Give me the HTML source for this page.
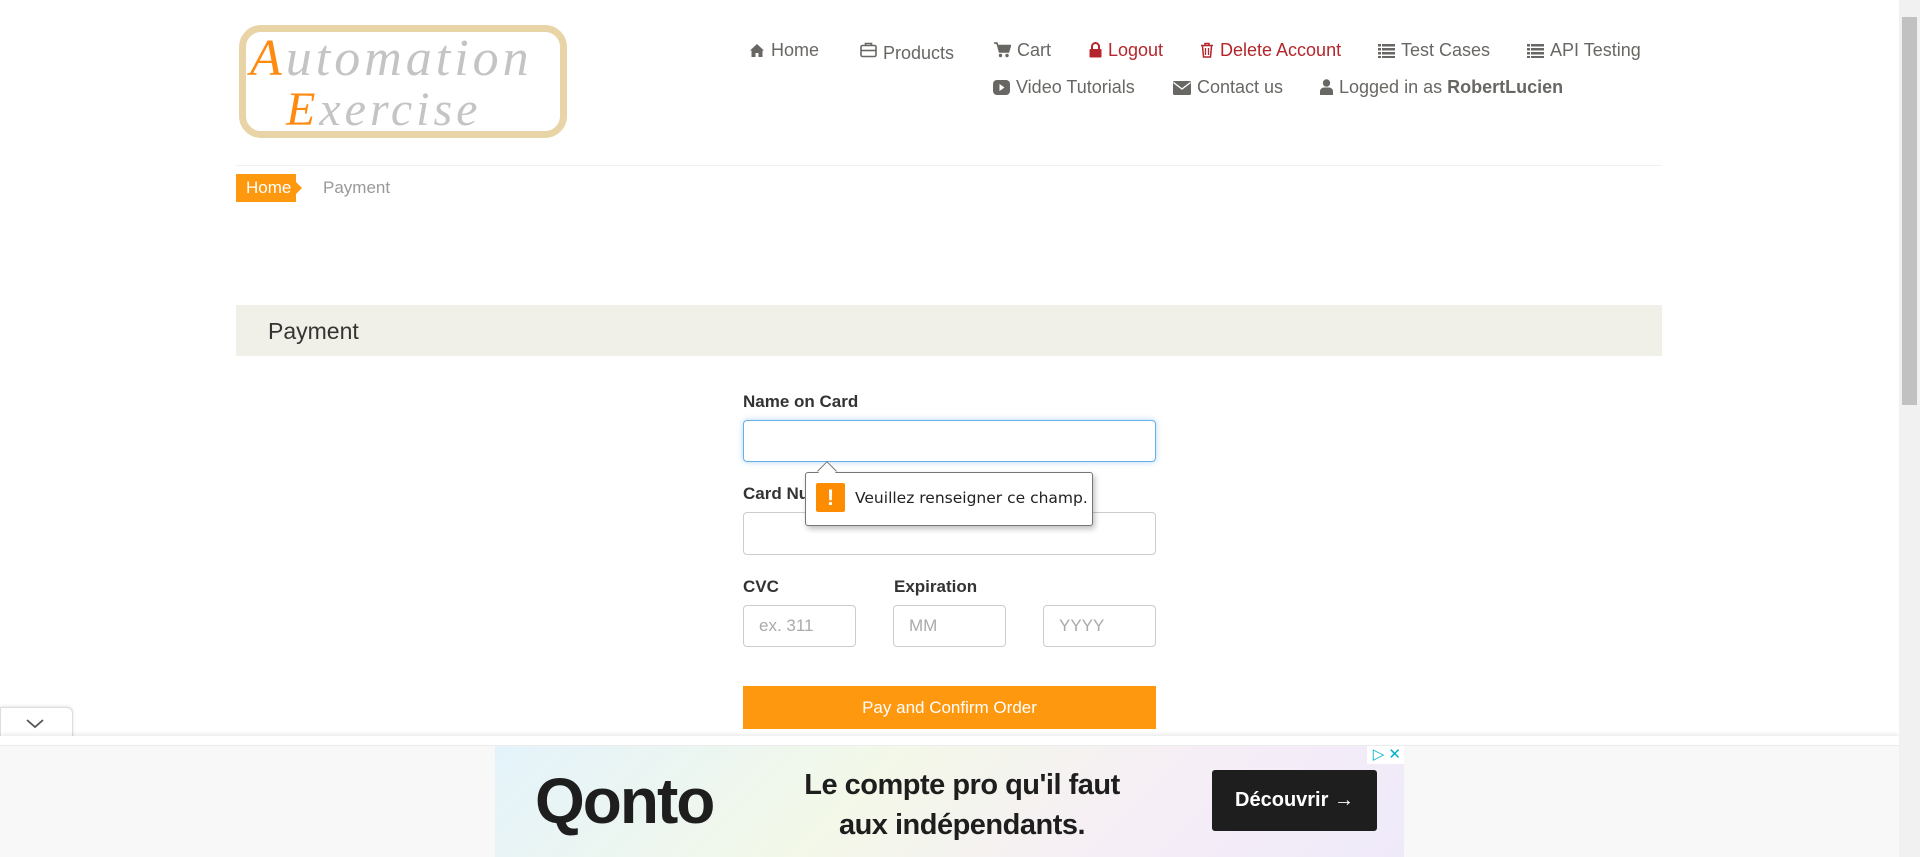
<!DOCTYPE html>
<html><head><meta charset="utf-8">
<style>
*{margin:0;padding:0;box-sizing:border-box}
body{width:1920px;height:857px;overflow:hidden;background:#fff;font-family:"Liberation Sans",Arial,sans-serif;position:relative;color:#696763}
.a{position:absolute;white-space:nowrap}
.nav{font-size:18px;color:#696763}
.nav svg{vertical-align:-2px;margin-right:6px}
.red{color:#b4262b}
.lbl{font-size:17px;font-weight:bold;color:#333}
.inp{position:absolute;border:1px solid #ccc;border-radius:4px;background:#fff;font-size:17px;color:#aaa;padding-left:15px;display:flex;align-items:center}
</style></head><body>
<!-- logo -->
<div class="a" style="left:239px;top:25px;width:328px;height:113px;border:7px solid #e8d4a7;border-radius:22px;background:#fff"></div>
<div class="a" style="left:250px;top:32px;font-family:'Liberation Serif',serif;font-style:italic;font-size:52px;color:#c4c4c4;letter-spacing:4px;line-height:54px"><span style="color:#fe8a0f">A</span>utomation</div>
<div class="a" style="left:286px;top:85px;font-family:'Liberation Serif',serif;font-style:italic;font-size:48px;color:#c4c4c4;letter-spacing:4px;line-height:50px"><span style="color:#fe8a0f">E</span>xercise</div>

<!-- nav row 1 -->
<div class="a nav" style="left:749px;top:40px"><svg width="16" height="15" viewBox="0 0 16 15"><path d="M8 1 L1 7.5 L2.5 7.5 L2.5 14 L6.5 14 L6.5 10 L9.5 10 L9.5 14 L13.5 14 L13.5 7.5 L15 7.5 Z" fill="#696763"/></svg>Home</div>
<div class="a nav" style="left:860px;top:42px"><svg width="17" height="16" viewBox="0 0 17 16" style="vertical-align:1px"><path d="M5.5 3V1.5h6V3" fill="none" stroke="#696763" stroke-width="1.6"/><rect x="1" y="3.5" width="15" height="11" rx="1.5" fill="none" stroke="#696763" stroke-width="1.6"/><path d="M1 8.5h15" stroke="#696763" stroke-width="1.6"/></svg>Products</div>
<div class="a nav" style="left:994px;top:40px"><svg width="17" height="16" viewBox="0 0 17 16"><path d="M0 1h3l2.5 9h9l2-6.5H4.5" fill="#696763"/><path d="M0 1h3l2.5 9h9l2-6.5H4" fill="none" stroke="#696763" stroke-width="1.5"/><circle cx="6.5" cy="13.5" r="1.7" fill="#696763"/><circle cx="13" cy="13.5" r="1.7" fill="#696763"/></svg>Cart</div>
<div class="a nav red" style="left:1089px;top:40px"><svg width="13" height="16" viewBox="0 0 13 16"><path d="M3 7V4.5a3.5 3.5 0 0 1 7 0V7" fill="none" stroke="#b4262b" stroke-width="2"/><rect x="0.5" y="7" width="12" height="8.5" rx="1" fill="#b4262b"/></svg>Logout</div>
<div class="a nav red" style="left:1200px;top:40px"><svg width="14" height="16" viewBox="0 0 14 16"><path d="M1 3.5h12M5 3.5V1.5h4v2" fill="none" stroke="#b4262b" stroke-width="1.5"/><path d="M2.5 4l1 11h7l1-11" fill="none" stroke="#b4262b" stroke-width="1.5"/><path d="M5.5 6v7M8.5 6v7" stroke="#b4262b" stroke-width="1.3"/></svg>Delete Account</div>
<div class="a nav" style="left:1378px;top:40px"><svg width="17" height="14" viewBox="0 0 17 14"><g fill="#696763"><rect x="0" y="0" width="3" height="2.5"/><rect x="4" y="0" width="13" height="2.5"/><rect x="0" y="4" width="3" height="2.5"/><rect x="4" y="4" width="13" height="2.5"/><rect x="0" y="8" width="3" height="2.5"/><rect x="4" y="8" width="13" height="2.5"/><rect x="0" y="12" width="3" height="2"/><rect x="4" y="12" width="13" height="2"/></g></svg>Test Cases</div>
<div class="a nav" style="left:1527px;top:40px"><svg width="17" height="14" viewBox="0 0 17 14"><g fill="#696763"><rect x="0" y="0" width="3" height="2.5"/><rect x="4" y="0" width="13" height="2.5"/><rect x="0" y="4" width="3" height="2.5"/><rect x="4" y="4" width="13" height="2.5"/><rect x="0" y="8" width="3" height="2.5"/><rect x="4" y="8" width="13" height="2.5"/><rect x="0" y="12" width="3" height="2"/><rect x="4" y="12" width="13" height="2"/></g></svg>API Testing</div>
<!-- nav row 2 -->
<div class="a nav" style="left:993px;top:77px"><svg width="17" height="15" viewBox="0 0 17 15"><rect x="0" y="0" width="17" height="15" rx="4" fill="#696763"/><path d="M6.5 4v7l5-3.5z" fill="#fff"/></svg>Video Tutorials</div>
<div class="a nav" style="left:1173px;top:77px"><svg width="18" height="14" viewBox="0 0 18 14"><rect x="0" y="0" width="18" height="14" rx="1.5" fill="#696763"/><path d="M0.5 1.5L9 8l8.5-6.5" fill="none" stroke="#fff" stroke-width="1.4"/></svg>Contact us</div>
<div class="a nav" style="left:1320px;top:77px"><svg width="13" height="16" viewBox="0 0 13 16"><circle cx="6.5" cy="4" r="3.7" fill="#696763"/><path d="M0 16v-3.5C0 10 2 8.5 4 8.5h5c2 0 4 1.5 4 4V16z" fill="#696763"/></svg>Logged in as <b>RobertLucien</b></div>

<div class="a" style="left:236px;top:165px;width:1426px;height:1px;background:#f0f0f0"></div>
<!-- breadcrumb -->
<div class="a" style="left:236px;top:174px;width:60px;height:28px;background:#fe980f;color:#fff;font-size:17px;line-height:28px;padding-left:10px">Home</div>
<div class="a" style="left:295px;top:181px;width:0;height:0;border-left:7px solid #fe980f;border-top:7px solid transparent;border-bottom:7px solid transparent"></div>
<div class="a" style="left:323px;top:178px;font-size:17px;color:#999">Payment</div>

<!-- heading bar -->
<div class="a" style="left:236px;top:305px;width:1426px;height:51px;background:#f0f0e9"></div>
<div class="a" style="left:268px;top:318px;font-size:23px;color:#363432">Payment</div>

<!-- form -->
<div class="a lbl" style="left:743px;top:392px">Name on Card</div>
<div class="inp" style="left:743px;top:420px;width:413px;height:42px;border-color:#66afe9;box-shadow:0 0 6px rgba(102,175,233,.5)"></div>
<div class="a lbl" style="left:743px;top:484px">Card Number</div>
<div class="inp" style="left:743px;top:512px;width:413px;height:43px"></div>
<div class="a lbl" style="left:743px;top:577px">CVC</div>
<div class="a lbl" style="left:894px;top:577px">Expiration</div>
<div class="inp" style="left:743px;top:605px;width:113px;height:42px">ex. 311</div>
<div class="inp" style="left:893px;top:605px;width:113px;height:42px">MM</div>
<div class="inp" style="left:1043px;top:605px;width:113px;height:42px">YYYY</div>
<div class="a" style="left:743px;top:686px;width:413px;height:43px;background:#fe980f;color:#fff;font-size:17px;text-align:center;line-height:43px">Pay and Confirm Order</div>

<!-- tooltip -->
<div class="a" style="left:805px;top:472px;width:288px;height:54px;background:#fff;border:1px solid #767676;border-radius:3px;box-shadow:2px 3px 6px rgba(0,0,0,.25)"></div>
<div class="a" style="left:820px;top:464px;width:14px;height:14px;background:#fff;border-left:1px solid #767676;border-top:1px solid #767676;transform:rotate(45deg)"></div>
<div class="a" style="left:816px;top:483px;width:29px;height:29px;background:#fe8c00;border-radius:2px;color:#fff;font-weight:bold;font-size:22px;text-align:center;line-height:29px">!</div>
<div class="a" style="left:855px;top:489px;color:#222;font-family:'DejaVu Sans',sans-serif;font-size:15.5px">Veuillez renseigner ce champ.</div>

<!-- ad bar -->
<div class="a" style="left:0;top:707px;width:73px;height:32px;background:#fff;border:1px solid #ddd;border-bottom:none;border-radius:0 6px 0 0;box-shadow:0 -1px 3px rgba(0,0,0,.1)"></div>
<svg class="a" style="left:26px;top:719px" width="18" height="10" viewBox="0 0 18 10"><path d="M1 1l8 7 8-7" fill="none" stroke="#555" stroke-width="1.8"/></svg>
<div class="a" style="left:0;top:736px;width:1899px;height:121px;background:#f8f8f8;border-top:1px solid #e6e6e6;box-shadow:0 -2px 4px rgba(0,0,0,.08)"></div>
<div class="a" style="left:0;top:736px;width:1899px;height:10px;background:#fff;border-bottom:1px solid #ececec"></div>
<div class="a" style="left:495px;top:746px;width:909px;height:111px;background:linear-gradient(135deg,#e4f3fb 0%,#f3f8e8 40%,#f6eef6 70%,#efeafa 100%)"></div>
<div class="a" style="left:535px;top:764px;font-size:64px;color:#1e1e1e;letter-spacing:-2px;font-weight:bold">Qonto</div>
<div class="a" style="left:782px;top:765px;font-size:29px;font-weight:bold;color:#1e1e1e;text-align:center;line-height:40px;width:360px;letter-spacing:-0.5px">Le compte pro qu'il faut<br>aux indépendants.</div>
<div class="a" style="left:1212px;top:770px;width:165px;height:61px;background:#1e1e1e;border-radius:3px;color:#fff;font-size:20px;font-weight:bold;text-align:center;line-height:61px">Découvrir →</div>
<div class="a" style="left:1367px;top:746px;width:37px;height:18px;background:#fff;color:#00aecd;font-size:15px;line-height:18px;text-align:right;padding-right:3px">▷ ✕</div>

<!-- scrollbar -->
<div class="a" style="left:1899px;top:0;width:21px;height:857px;background:#f1f1f1"></div>
<div class="a" style="left:1902px;top:17px;width:15px;height:388px;background:#c1c1c1"></div>
</body></html>
